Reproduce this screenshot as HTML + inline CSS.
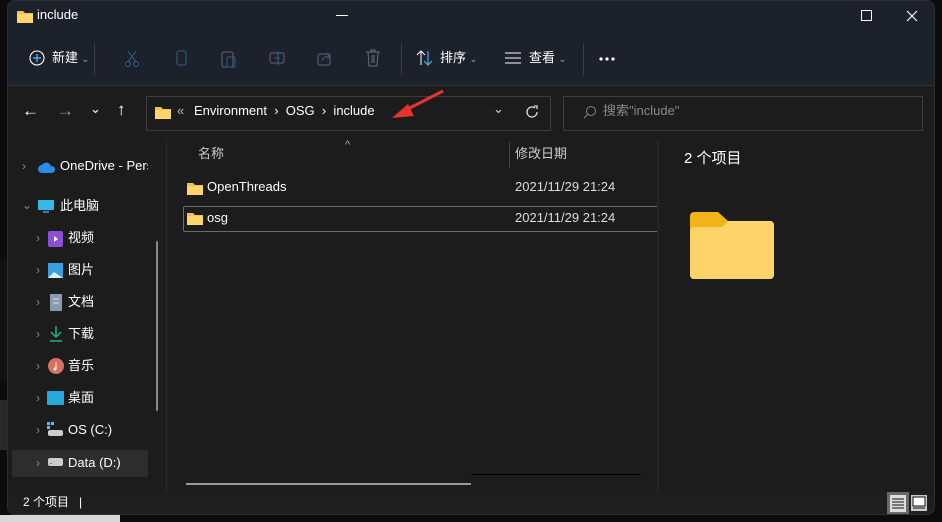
<!DOCTYPE html>
<html><head><meta charset="utf-8"><style>
*{margin:0;padding:0;box-sizing:border-box}
body{width:942px;height:522px;overflow:hidden;background:#0c0c0c;font-family:"Liberation Sans","Noto Sans CJK SC",sans-serif;color:#fff;position:relative;font-size:13px}
.a{position:absolute}
.win{left:7px;top:0;width:928px;height:515px;background:#1c1c1c;border-radius:8px;overflow:hidden;border:1px solid #2e2e2e}
.t{white-space:nowrap;line-height:16px}
.nav .t{font-size:13px;color:#fff}
.chev{color:#8a8a8a;font-size:12px;line-height:16px}
</style></head><body>
<div class="a" style="left:0;top:515px;width:120px;height:7px;background:#d8d8d8"></div>
<div class="a" style="left:0;top:260px;width:7px;height:120px;background:#111"></div>
<div class="a" style="left:0;top:400px;width:7px;height:50px;background:#2a2a2a"></div>
<div class="a win">
 <div class="a" style="left:0;top:0;width:928px;height:84px;background:#1d212c"></div>
 <div class="a" style="left:0;top:84px;width:928px;height:1px;background:#333"></div>
 <svg class="a" style="left:9px;top:8px" width="16" height="14"><path d="M0 2h6l2 2h8v10H0z" fill="#f2c14e"/><path d="M0 5h16v9H0z" fill="#fcd66c"/></svg>
 <div class="a t" style="left:29px;top:6px;font-size:13px">include</div>
 <div class="a" style="left:328px;top:14px;width:12px;height:1px;background:#fff"></div>
 <div class="a" style="left:853px;top:9px;width:11px;height:11px;border:1px solid #fff"></div>
 <svg class="a" style="left:898px;top:9px" width="12" height="12"><path d="M1 1l10 10M11 1L1 11" stroke="#fff" stroke-width="1.1"/></svg>
 <svg class="a" style="left:21px;top:49px" width="16" height="16"><circle cx="8" cy="8" r="7" fill="none" stroke="#fff" stroke-width="1.1"/><path d="M8 4v8M4 8h8" stroke="#4cc2ff" stroke-width="1.2"/></svg>
 <div class="a t" style="left:44px;top:49px">新建 <span style="font-size:9px;color:#aaa">⌄</span></div>
 <div class="a" style="left:86px;top:42px;width:1px;height:32px;background:#3a3f4a"></div>
 <svg class="a" style="left:116px;top:49px;opacity:.5" width="16" height="18"><path d="M4 1l8 11M12 1L4 12" stroke="#4c9be0" fill="none"/><circle cx="4" cy="14" r="2.5" stroke="#4c9be0" fill="none"/><circle cx="12" cy="14" r="2.5" stroke="#4c9be0" fill="none"/></svg>
 <svg class="a" style="left:166px;top:49px;opacity:.5" width="14" height="18"><rect x="3" y="1" width="9" height="14" rx="2" stroke="#4c9be0" fill="none"/></svg>
 <svg class="a" style="left:213px;top:48px;opacity:.5" width="16" height="19"><rect x="1" y="3" width="11" height="15" rx="2" stroke="#aaa" fill="none"/><rect x="6" y="8" width="8" height="10" rx="1" stroke="#4c9be0" fill="none"/></svg>
 <svg class="a" style="left:261px;top:49px;opacity:.5" width="18" height="16"><rect x="1" y="3" width="14" height="10" rx="2" stroke="#aaa" fill="none"/><path d="M9 1v14M5 8h6" stroke="#4c9be0"/></svg>
 <svg class="a" style="left:309px;top:49px;opacity:.5" width="16" height="16"><rect x="1" y="4" width="12" height="11" rx="2" stroke="#aaa" fill="none"/><path d="M5 11c1-4 4-5 8-5M10 3l3 3-3 3" stroke="#4c9be0" fill="none"/></svg>
 <svg class="a" style="left:357px;top:48px;opacity:.5" width="16" height="18"><path d="M1 3h14M6 3V1h4v2M3 3l1 14h8l1-14M7 6v8M9 6v8" stroke="#bbb" fill="none"/></svg>
 <div class="a" style="left:393px;top:42px;width:1px;height:32px;background:#3a3f4a"></div>
 <svg class="a" style="left:408px;top:49px" width="18" height="16"><path d="M5 15V1M1 5l4-4 4 4" stroke="#fff" fill="none"/><path d="M12 1v14M8 11l4 4 4-4" stroke="#4cc2ff" fill="none"/></svg>
 <div class="a t" style="left:432px;top:49px">排序 <span style="font-size:9px;color:#aaa">⌄</span></div>
 <svg class="a" style="left:497px;top:51px" width="16" height="12"><path d="M0 1h16M0 6h16M0 11h16" stroke="#fff"/></svg>
 <div class="a t" style="left:521px;top:49px">查看 <span style="font-size:9px;color:#aaa">⌄</span></div>
 <div class="a" style="left:575px;top:42px;width:1px;height:32px;background:#3a3f4a"></div>
 <svg class="a" style="left:591px;top:56px" width="18" height="4"><circle cx="2" cy="2" r="1.6" fill="#fff"/><circle cx="8" cy="2" r="1.6" fill="#fff"/><circle cx="14" cy="2" r="1.6" fill="#fff"/></svg>
 <div class="a t" style="left:14px;top:102px;font-size:17px">←</div>
 <div class="a t" style="left:49px;top:102px;font-size:17px;color:#999">→</div>
 <div class="a t" style="left:82px;top:100px;font-size:13px">⌄</div>
 <div class="a t" style="left:109px;top:101px;font-size:17px">↑</div>
 <div class="a" style="left:138px;top:95px;width:405px;height:35px;border:1px solid #3c3c3c;background:#1c1c1c"></div>
 <svg class="a" style="left:147px;top:104px" width="16" height="14"><path d="M0 2h6l2 2h8v10H0z" fill="#f2c14e"/><path d="M0 5h16v9H0z" fill="#fcd66c"/></svg>
 <div class="a t" style="left:169px;top:102px;color:#bbb">«</div>
 <div class="a t" style="left:186px;top:102px">Environment &nbsp;›&nbsp; OSG &nbsp;›&nbsp; include</div>
 <svg class="a" style="left:380px;top:88px" width="60" height="32"><path d="M55 2L12 24" stroke="#e8322d" stroke-width="3"/><path d="M4 29L20 15l6 12z" fill="#e8322d"/></svg>
 <div class="a t" style="left:485px;top:100px;color:#ccc">⌄</div>
 <svg class="a" style="left:517px;top:104px" width="14" height="14"><path d="M12 7a5 5 0 1 1-2-4" stroke="#ddd" fill="none" stroke-width="1.3"/><path d="M9 1h3v3" stroke="#ddd" fill="none" stroke-width="1.3"/></svg>
 <div class="a" style="left:555px;top:95px;width:360px;height:35px;border:1px solid #3c3c3c"></div>
 <svg class="a" style="left:575px;top:104px" width="14" height="14"><circle cx="8" cy="6" r="4.5" stroke="#888" fill="none"/><path d="M5 9l-4 4" stroke="#888"/></svg>
 <div class="a t" style="left:595px;top:102px;color:#888">搜索"include"</div>
 <div class="a" style="left:158px;top:140px;width:1px;height:350px;background:#2b2b2b"></div>
 <div class="a" style="left:148px;top:240px;width:2px;height:170px;background:#888;border-radius:1px"></div>
 <div class="nav">
  <div class="a chev" style="left:14px;top:157px">›</div>
  <svg class="a" style="left:30px;top:161px" width="18" height="11"><path d="M4 11a4 4 0 0 1 0-8 5 5 0 0 1 9 1 3.5 3.5 0 0 1 1 7z" fill="#2b8be6"/></svg>
  <div class="a t" style="left:52px;top:157px;width:88px;overflow:hidden">OneDrive - Personal</div>
  <div class="a chev" style="left:14px;top:196px">⌄</div>
  <svg class="a" style="left:30px;top:199px" width="16" height="14"><rect x="0" y="0" width="16" height="10" fill="#35b8e8"/><rect x="5" y="11" width="6" height="2" fill="#2a7fb0"/></svg>
  <div class="a t" style="left:52px;top:197px">此电脑</div>
  <div class="a chev" style="left:28px;top:229px">›</div><svg class="a" style="left:40px;top:230px" width="15" height="16"><rect width="15" height="16" rx="2" fill="#8a4fd6"/><path d="M6 5l4 3-4 3z" fill="#fff"/></svg><div class="a t" style="left:60px;top:229px">视频</div>
  <div class="a chev" style="left:28px;top:261px">›</div><svg class="a" style="left:40px;top:262px" width="15" height="15"><rect width="15" height="15" fill="#3a9ee0"/><path d="M0 15l6-6 9 6z" fill="#d8eefc"/></svg><div class="a t" style="left:60px;top:261px">图片</div>
  <div class="a chev" style="left:28px;top:293px">›</div><svg class="a" style="left:42px;top:293px" width="12" height="17"><rect width="12" height="17" fill="#8a9bb0"/><path d="M3 5h6M3 9h6" stroke="#e0e6ee"/></svg><div class="a t" style="left:60px;top:293px">文档</div>
  <div class="a chev" style="left:28px;top:325px">›</div><svg class="a" style="left:41px;top:325px" width="14" height="16"><path d="M7 0v11M2 6l5 5 5-5M1 15h12" stroke="#1fb08a" stroke-width="1.5" fill="none"/></svg><div class="a t" style="left:60px;top:325px">下载</div>
  <div class="a chev" style="left:28px;top:357px">›</div><svg class="a" style="left:40px;top:357px" width="16" height="16"><circle cx="8" cy="8" r="8" fill="#d9715e"/><path d="M8 4v7" stroke="#fff"/><circle cx="7" cy="11" r="1.5" fill="#fff"/></svg><div class="a t" style="left:60px;top:357px">音乐</div>
  <div class="a chev" style="left:28px;top:389px">›</div><svg class="a" style="left:39px;top:390px" width="17" height="15"><rect width="17" height="14" rx="1" fill="#23a9dc"/></svg><div class="a t" style="left:60px;top:389px">桌面</div>
  <div class="a chev" style="left:28px;top:421px">›</div><svg class="a" style="left:39px;top:421px" width="16" height="16"><rect x="0" y="0" width="3" height="3" fill="#4cc2ff"/><rect x="4" y="0" width="3" height="3" fill="#4cc2ff"/><rect x="0" y="4" width="3" height="3" fill="#4cc2ff"/><rect x="1" y="8" width="15" height="6" rx="2" fill="#ccc"/></svg><div class="a t" style="left:60px;top:421px">OS (C:)</div>
  <div class="a" style="left:4px;top:449px;width:136px;height:27px;background:#2d2d2d;border-radius:3px"></div>
  <div class="a chev" style="left:28px;top:454px">›</div><svg class="a" style="left:39px;top:456px" width="16" height="10"><rect x="1" y="1" width="15" height="8" rx="2" fill="#ccc"/><rect x="3" y="6" width="2" height="1" fill="#3a3"/></svg><div class="a t" style="left:60px;top:454px">Data (D:)</div>
 </div>
 <div class="a t" style="left:337px;top:136px;color:#aaa;font-size:11px">^</div>
 <div class="a t" style="left:190px;top:145px;color:#ccc">名称</div>
 <div class="a" style="left:501px;top:141px;width:1px;height:27px;background:#444"></div>
 <div class="a t" style="left:507px;top:145px;color:#ccc">修改日期</div>
 <svg class="a" style="left:179px;top:181px" width="16" height="13"><path d="M0 1h6l2 2h8v10H0z" fill="#f2c14e"/><path d="M0 4h16v9H0z" fill="#fcd66c"/></svg>
 <div class="a t" style="left:199px;top:178px">OpenThreads</div>
 <div class="a t" style="left:507px;top:178px;color:#ddd">2021/11/29 21:24</div>
 <div class="a" style="left:175px;top:205px;width:475px;height:26px;border:1px solid #6a6a6a;border-right:none;border-radius:2px 0 0 2px"></div>
 <svg class="a" style="left:179px;top:211px" width="16" height="13"><path d="M0 1h6l2 2h8v10H0z" fill="#f2c14e"/><path d="M0 4h16v9H0z" fill="#fcd66c"/></svg>
 <div class="a t" style="left:199px;top:209px">osg</div>
 <div class="a t" style="left:507px;top:209px;color:#ddd">2021/11/29 21:24</div>
 <div class="a" style="left:178px;top:482px;width:285px;height:2px;background:#9a9a9a"></div>
 <div class="a" style="left:463px;top:473px;width:170px;height:1px;background:#000"></div>
 <div class="a" style="left:649px;top:140px;width:2px;height:351px;background:#262626"></div>
 <div class="a t" style="left:676px;top:150px;font-size:15px">2 个项目</div>
 <svg class="a" style="left:682px;top:211px" width="84" height="67"><path d="M0 4a4 4 0 0 1 4-4h24l10 9h42a4 4 0 0 1 4 4v50a4 4 0 0 1-4 4H4a4 4 0 0 1-4-4z" fill="#f0b418"/><path d="M0 19a4 4 0 0 1 4-4h28l6-6h42a4 4 0 0 1 4 4v50a4 4 0 0 1-4 4H4a4 4 0 0 1-4-4z" fill="#fcd46a"/></svg>
 <div class="a" style="left:0;top:491px;width:928px;height:24px;background:#1e1e1e"></div>
 <div class="a t" style="left:15px;top:493px;font-size:12px">2 个项目 &nbsp;&nbsp;|</div>
 <div class="a" style="left:879px;top:491px;width:22px;height:23px;background:#6a6a6a"></div>
 <svg class="a" style="left:882px;top:494px" width="16" height="17"><rect width="16" height="17" fill="#ddd"/><path d="M2 4h12M2 7h12M2 10h12M2 13h12" stroke="#111"/></svg>
 <svg class="a" style="left:903px;top:494px" width="16" height="16"><rect width="16" height="16" fill="#ccc"/><rect x="2" y="2" width="12" height="9" fill="#fff" stroke="#111"/><path d="M2 13h12" stroke="#111"/></svg>
</div>
</body></html>
